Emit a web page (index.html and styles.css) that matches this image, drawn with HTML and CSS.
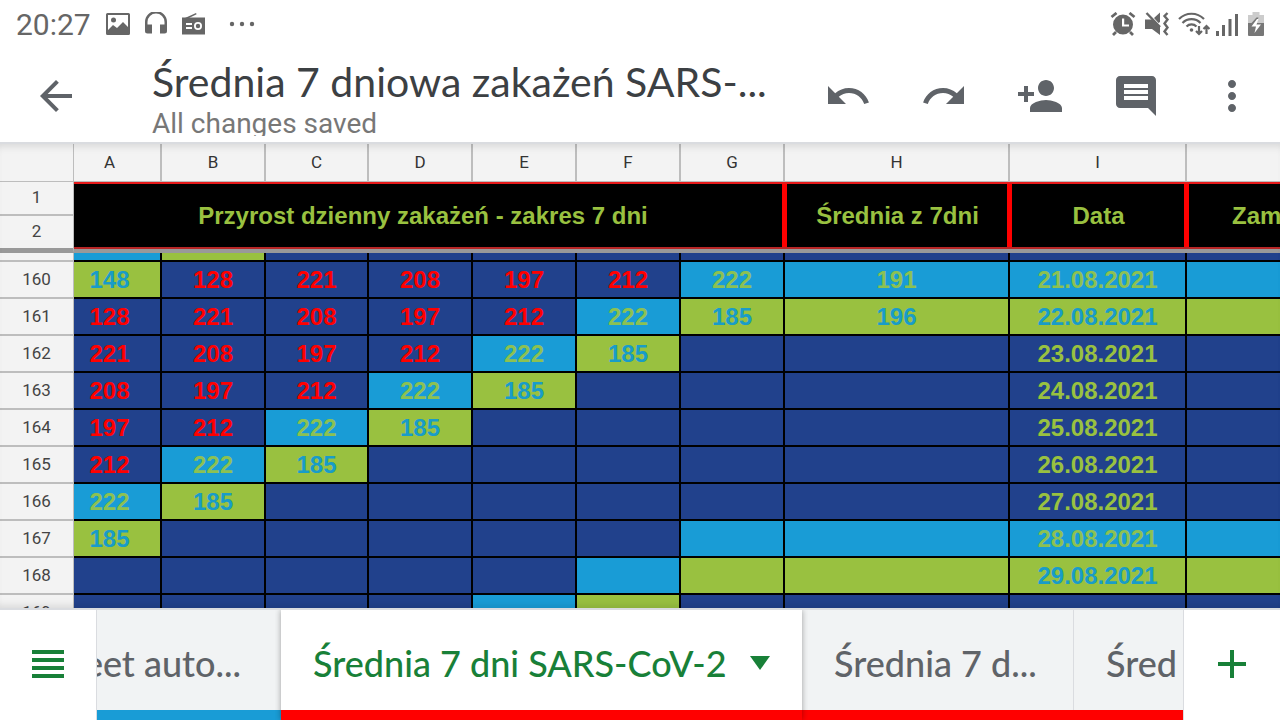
FILE: index.html
```html
<!DOCTYPE html>
<html lang="pl">
<head>
<meta charset="utf-8">
<meta name="viewport" content="width=device-width, initial-scale=1">
<title>Średnia 7 dniowa zakażeń SARS-...</title>
<link rel="stylesheet" href="styles.css">
</head>
<body>
<div class="status">
  <span class="clock">20:27</span>
  <svg class="s-picture" width="24" height="24" viewBox="0 0 24 24"><path fill-rule="evenodd" d="M1.500 1h21q1.500 0 1.500 1.500v19q0 1.500-1.500 1.500h-21Q0 23 0 21.500v-19Q0 1 1.500 1zM2 3v15l5-5 4 3 6-6 5 5V3z"/><circle cx="7.500" cy="8" r="2.500"/></svg>
  <svg class="s-phones" width="22" height="24" viewBox="0 0 22 24"><path d="M0 19V10a11 11 0 0 1 22 0v9q0 2.500-2.500 2.500H15v-9h4.500V10a8.500 8.500 0 0 0-17 0v2.500H7v9H2.500Q0 21.500 0 19z"/></svg>
  <svg class="s-radio" width="24" height="24" viewBox="0 0 24 24"><path d="M3 6L14 1l.6 1.200L7 6z"/><path fill-rule="evenodd" d="M0 5.500h23v17H0zM4 11v2h6v-2zm0 4v2h6v-2zm12-5a4 4 0 1 0 0 8 4 4 0 0 0 0-8zm0 1.800a2.200 2.200 0 1 1 0 4.400 2.200 2.200 0 0 1 0-4.400z"/></svg>
  <svg class="s-dots" width="26" height="24" viewBox="0 0 26 24"><circle cx="3" cy="12" r="2.200"/><circle cx="13" cy="12" r="2.200"/><circle cx="23" cy="12" r="2.200"/></svg>
  <span class="grow"></span>
  <svg class="s-alarm" width="26" height="24" viewBox="0 0 26 24"><path fill-rule="evenodd" d="M13 2.500a10 10 0 1 0 0 20 10 10 0 0 0 0-20zM12 6.500h2.200v6H19v2h-7z"/><path d="M1.500 5L6.500 1M24.500 5L19.500 1M6 20l-3 3M20 20l3 3" fill="none" stroke="#666" stroke-width="2.800"/></svg>
  <svg class="s-mute" width="26" height="24" viewBox="0 0 26 24"><path d="M1 7.500h7L16 15v8L8 17H1zM10 6l6-5.500V10l-1.500 1z"/><path d="M2.500 1l13.500 14" fill="none" stroke="#666" stroke-width="2.400"/><path d="M23.500 1L20.500 4l3 3.500-3 4 3 4-3 4 3 3.500" fill="none" stroke="#666" stroke-width="2.400"/></svg>
  <svg class="s-wifi" width="32" height="24" viewBox="0 0 32 24"><g fill="none" stroke="#666" stroke-width="2.200"><path d="M1 7a17.500 17.500 0 0 1 25 0M4.500 11a12.500 12.500 0 0 1 18 0M8.500 14.500a7 7 0 0 1 10 0M21 14v8M18 19l3 3 3-3M28.500 22v-8M25.500 17l3-3 3 3"/></g><circle cx="13.500" cy="18" r="1.800"/></svg>
  <svg class="s-signal" width="22" height="24" viewBox="0 0 22 24"><path d="M0 19h3v5H0zM6 13h3v11H6zM12.500 7h3v17h-3zM19 2h3v22h-3z"/></svg>
  <svg class="s-battery" width="16" height="24" viewBox="0 0 16 24"><path fill="#ccc" d="M4.500 0h7v3H16v9H0V3h4.500z"/><path fill="#777" d="M0 11h16v12q0 1-1 1H1q-1 0-1-1z"/><path fill="#777" d="M8.500 5.500h2L8.500 11h-5z"/><path fill="#fff" d="M9 7L3.500 14.500H8L6.500 21l6.500-8.500H8.500L10.500 7z"/></svg>
</div>

<header class="appbar">
  <button class="icon" aria-label="Back"><svg viewBox="0 0 24 24"><path d="M20 11H7.830l5.590-5.590L12 4l-8 8 8 8 1.410-1.410L7.830 13H20v-2z"/></svg></button>
  <div class="titles">
    <h1>Średnia 7 dniowa zakażeń SARS-...</h1>
    <p>All changes saved</p>
  </div>
  <div class="actions">
    <button class="icon" aria-label="Undo"><svg viewBox="0 0 24 24"><path d="M12.500 8c-2.650 0-5.050.99-6.900 2.600L2 7v9h9l-3.620-3.620c1.390-1.160 3.160-1.880 5.120-1.880 3.540 0 6.550 2.310 7.600 5.500l2.370-.78C21.080 11.030 17.150 8 12.500 8z"/></svg></button>
    <button class="icon" aria-label="Redo"><svg viewBox="0 0 24 24"><path d="M18.400 10.600C16.550 8.990 14.150 8 11.500 8c-4.650 0-8.580 3.030-9.960 7.220L3.900 16c1.050-3.190 4.050-5.500 7.600-5.500 1.950 0 3.730.72 5.120 1.880L13 16h9V7l-3.600 3.600z"/></svg></button>
    <button class="icon" aria-label="Share"><svg viewBox="0 0 24 24"><path d="M15 12c2.210 0 4-1.790 4-4s-1.790-4-4-4-4 1.790-4 4 1.790 4 4 4zm-9-2V7H4v3H1v2h3v3h2v-3h3v-2H6zm9 4c-2.670 0-8 1.340-8 4v2h16v-2c0-2.660-5.330-4-8-4z"/></svg></button>
    <button class="icon" aria-label="Comments"><svg viewBox="0 0 24 24"><path d="M21.990 4c0-1.100-.89-2-1.990-2H4c-1.100 0-2 .9-2 2v12c0 1.100.9 2 2 2h14l4 4-.01-18zM18 14H6v-2h12v2zm0-3H6V9h12v2zm0-3H6V6h12v2z"/></svg></button>
    <button class="icon" aria-label="More"><svg viewBox="0 0 24 24"><path d="M12 8c1.100 0 2-.9 2-2s-.9-2-2-2-2 .9-2 2 .9 2 2 2zm0 2c-1.100 0-2 .9-2 2s.9 2 2 2 2-.9 2-2-.9-2-2-2zm0 6c-1.100 0-2 .9-2 2s.9 2 2 2 2-.9 2-2-.9-2-2-2z"/></svg></button>
  </div>
</header>

<main class="sheet">
<table>
  <colgroup><col class="w-num"><col class="w-a"><col class="w-day"><col class="w-c"><col class="w-day"><col class="w-day"><col class="w-day"><col class="w-day"><col class="w-h"><col class="w-i"><col></colgroup>
  <thead>
    <tr class="letters"><th></th><th class="first">A</th><th>B</th><th>C</th><th>D</th><th>E</th><th>F</th><th>G</th><th>H</th><th>I</th><th></th></tr>
    <tr class="top1"><th class="num">1</th><th class="head wide" colspan="7" rowspan="2">Przyrost dzienny zakażeń - zakres 7 dni</th><th class="head" rowspan="2">Średnia z 7dni</th><th class="head" rowspan="2">Data</th><th class="head last" rowspan="2">Zam</th></tr>
    <tr class="top2"><th class="num">2</th></tr>
  </thead>
  <tbody>
    <tr class="sliver"><th class="num"></th><td class="b"></td><td class="g"></td><td></td><td></td><td></td><td></td><td></td><td></td><td></td><td></td></tr>
    <tr><th class="num">160</th><td class="g first">148</td><td>128</td><td>221</td><td>208</td><td>197</td><td>212</td><td class="b">222</td><td class="b">191</td><td class="b">21.08.2021</td><td class="b"></td></tr>
    <tr><th class="num">161</th><td class="first">128</td><td>221</td><td>208</td><td>197</td><td>212</td><td class="b">222</td><td class="g">185</td><td class="g">196</td><td class="g">22.08.2021</td><td class="g"></td></tr>
    <tr><th class="num">162</th><td class="first">221</td><td>208</td><td>197</td><td>212</td><td class="b">222</td><td class="g">185</td><td></td><td></td><td class="date">23.08.2021</td><td></td></tr>
    <tr><th class="num">163</th><td class="first">208</td><td>197</td><td>212</td><td class="b">222</td><td class="g">185</td><td></td><td></td><td></td><td class="date">24.08.2021</td><td></td></tr>
    <tr><th class="num">164</th><td class="first">197</td><td>212</td><td class="b">222</td><td class="g">185</td><td></td><td></td><td></td><td></td><td class="date">25.08.2021</td><td></td></tr>
    <tr><th class="num">165</th><td class="first">212</td><td class="b">222</td><td class="g">185</td><td></td><td></td><td></td><td></td><td></td><td class="date">26.08.2021</td><td></td></tr>
    <tr><th class="num">166</th><td class="b first">222</td><td class="g">185</td><td></td><td></td><td></td><td></td><td></td><td></td><td class="date">27.08.2021</td><td></td></tr>
    <tr><th class="num">167</th><td class="g first">185</td><td></td><td></td><td></td><td></td><td></td><td class="b"></td><td class="b"></td><td class="b">28.08.2021</td><td class="b"></td></tr>
    <tr><th class="num">168</th><td></td><td></td><td></td><td></td><td></td><td class="b"></td><td class="g"></td><td class="g"></td><td class="g">29.08.2021</td><td class="g"></td></tr>
    <tr><th class="num">169</th><td></td><td></td><td></td><td></td><td class="b"></td><td class="g"></td><td></td><td></td><td></td><td></td></tr>
  </tbody>
</table>
</main>

<footer class="tabs">
  <button class="side all" aria-label="All sheets"><svg width="32" height="28" viewBox="0 0 32 28"><path d="M0 0h32v4H0zM0 8h32v4H0zM0 16h32v4H0zM0 24h32v4H0z"/></svg></button>
  <div class="strip" role="tablist">
    <button class="tab blue" role="tab">Sheet auto...</button>
    <button class="tab active" role="tab" aria-selected="true">Średnia 7 dni SARS-CoV-2<svg width="20" height="14" viewBox="0 0 20 14"><path d="M0 0h20L10 14z"/></svg></button>
    <button class="tab third" role="tab">Średnia 7 d...</button>
    <button class="tab fourth" role="tab">Śred</button>
  </div>
  <button class="side add" aria-label="Add sheet"><svg width="28" height="28" viewBox="0 0 28 28"><path d="M12 0h4v12h12v4H16v12h-4V16H0v-4h12z"/></svg></button>
</footer>
</body>
</html>
```
FILE: styles.css
```css
* { box-sizing: border-box; }

body {
  margin: 0;
  height: 100vh;
  display: flex;
  flex-direction: column;
  overflow: hidden;
  background: #fff;
  font-family: Roboto, sans-serif;
}

button {
  margin: 0;
  padding: 0;
  border: 0;
  background: none;
  font: inherit;
}

svg { display: block; flex: none; }

.status {
  flex: none;
  display: flex;
  align-items: center;
  height: 48px;
  padding: 0 16px;
  color: #666;
  fill: #666;
}
.clock {
  width: 90px;
  font-size: 30px;
  font-weight: 400;
}
.s-phones { margin-left: 15px; }
.s-radio { margin-left: 15px; }
.s-dots { margin-left: 23px; }
.grow { flex: 1; }
.s-mute { margin-left: 8px; }
.s-wifi { margin-left: 8px; }
.s-signal { margin-left: 6px; }
.s-battery { margin-left: 10px; }

.appbar {
  flex: none;
  display: flex;
  align-items: center;
  height: 96px;
  padding: 2px 24px 0 32px;
  border-bottom: 2px solid #dadce0;
}
.icon {
  flex: none;
  width: 48px;
  height: 48px;
  fill: #5f6368;
}
.titles {
  flex: 1;
  min-width: 0;
  height: 80px;
  margin-left: 72px;
  overflow: hidden;
  white-space: nowrap;
}
.titles h1 {
  margin: 0;
  font-family: Lato, sans-serif;
  font-size: 41px;
  font-weight: 400;
  line-height: 52px;
  color: #3c4043;
}
.titles p {
  margin: 0;
  font-size: 28px;
  line-height: 32px;
  color: #777;
}
.actions {
  flex: none;
  display: flex;
  gap: 48px;
}

.sheet {
  position: relative;
  flex: 1;
  min-height: 0;
  overflow: hidden;
  background: #f3f3f3;
}
.sheet::after {
  content: "";
  position: absolute;
  inset: 0;
  box-shadow: inset 0 8px 8px -6px rgba(0, 0, 0, .12), inset 0 -8px 8px -6px rgba(0, 0, 0, .12);
  pointer-events: none;
}
table {
  width: 100%;
  table-layout: fixed;
  border-spacing: 0;
}
.w-num { width: 74px; }
.w-a { width: 88px; }
.w-day { width: 104px; }
.w-c { width: 103px; }
.w-h { width: 225px; }
.w-i { width: 177px; }

th, td { padding: 0; text-align: center; white-space: nowrap; overflow: hidden; }
tr { height: 37px; }

.letters { height: 38px; }
.letters th {
  padding-bottom: 2px;
  border-right: 2px solid #bdbdbd;
  border-bottom: 1px solid #bdbdbd;
  font-size: 17px;
  font-weight: 400;
  color: #333;
}
.letters th:first-child { border-right-width: 1px; }
.letters th:last-child { border-right: 0; }

.num {
  padding-bottom: 2px;
  border-right: 1px solid #bdbdbd;
  border-bottom: 2px solid #bdbdbd;
  background: #f3f3f3;
  font-size: 17px;
  font-weight: 400;
  color: #444;
}
.top1 { height: 34px; }
.top2 .num { border-bottom: 5px solid #999; }

.head {
  border-bottom: 4px solid #999;
  background: #000;
  box-shadow: inset 0 2px #e61a1a, inset 0 -2px #b82626, inset -3px 0 #f00, inset 2px 0 #f00;
  font-family: "Liberation Sans", sans-serif;
  font-size: 24px;
  font-weight: 700;
  color: #99c140;
}
.head.wide { box-shadow: inset 0 2px #e61a1a, inset 0 -2px #b82626, inset -3px 0 #f00; padding-right: 13px; }
.head.last { box-shadow: inset 0 2px #e61a1a, inset 0 -2px #b82626, inset 2px 0 #f00; padding-left: 45px; text-align: left; }

td {
  border-right: 2px solid #000;
  border-bottom: 2px solid #000;
  background: #21418c;
  font-family: "Liberation Sans", sans-serif;
  font-size: 24px;
  font-weight: 700;
  line-height: 32px;
  color: #f00;
}
td:last-child { border-right: 0; }
.sliver { height: 9px; }
.sliver .num { padding: 0; }
.first { padding-right: 15px; }
td.date { color: #99c140; }
td.b { background: #199cd6; color: #8cc152; }
td.g { background: #99c140; color: #199cc8; }

.tabs {
  flex: none;
  display: flex;
  height: 112px;
  border-top: 2px solid #dadce0;
}
.side {
  flex: none;
  display: flex;
  align-items: center;
  justify-content: center;
  width: 97px;
  padding-bottom: 2px;
  fill: #188038;
}
.all { border-right: 1px solid #dadce0; }
.add { border-left: 1px solid #dadce0; }
.strip {
  flex: 1;
  min-width: 0;
  display: flex;
  overflow: hidden;
}
.tab {
  flex: none;
  display: flex;
  align-items: center;
  padding: 6px 32px 0;
  border-bottom: 10px solid #f00;
  background: #f1f3f4;
  color: #5f6368;
  font-family: Lato, sans-serif;
  font-size: 36px;
  font-weight: 500;
  line-height: 44px;
  white-space: nowrap;
  overflow: hidden;
}
.tab.blue {
  width: 184px;
  justify-content: flex-end;
  padding: 6px 40px 0 0;
  border-bottom-color: #199cd6;
}
.tab.active {
  position: relative;
  justify-content: space-between;
  width: 521px;
  background: #fff;
  color: #188038;
  fill: #188038;
  overflow: visible;
  box-shadow: 0 0 6px rgba(0, 0, 0, .35);
  clip-path: inset(0 -6px 0 -6px);
}
.tab.third { width: 272px; box-shadow: inset -1px 0 #dadce0; }
.tab.fourth { flex: 1; min-width: 0; }
```
